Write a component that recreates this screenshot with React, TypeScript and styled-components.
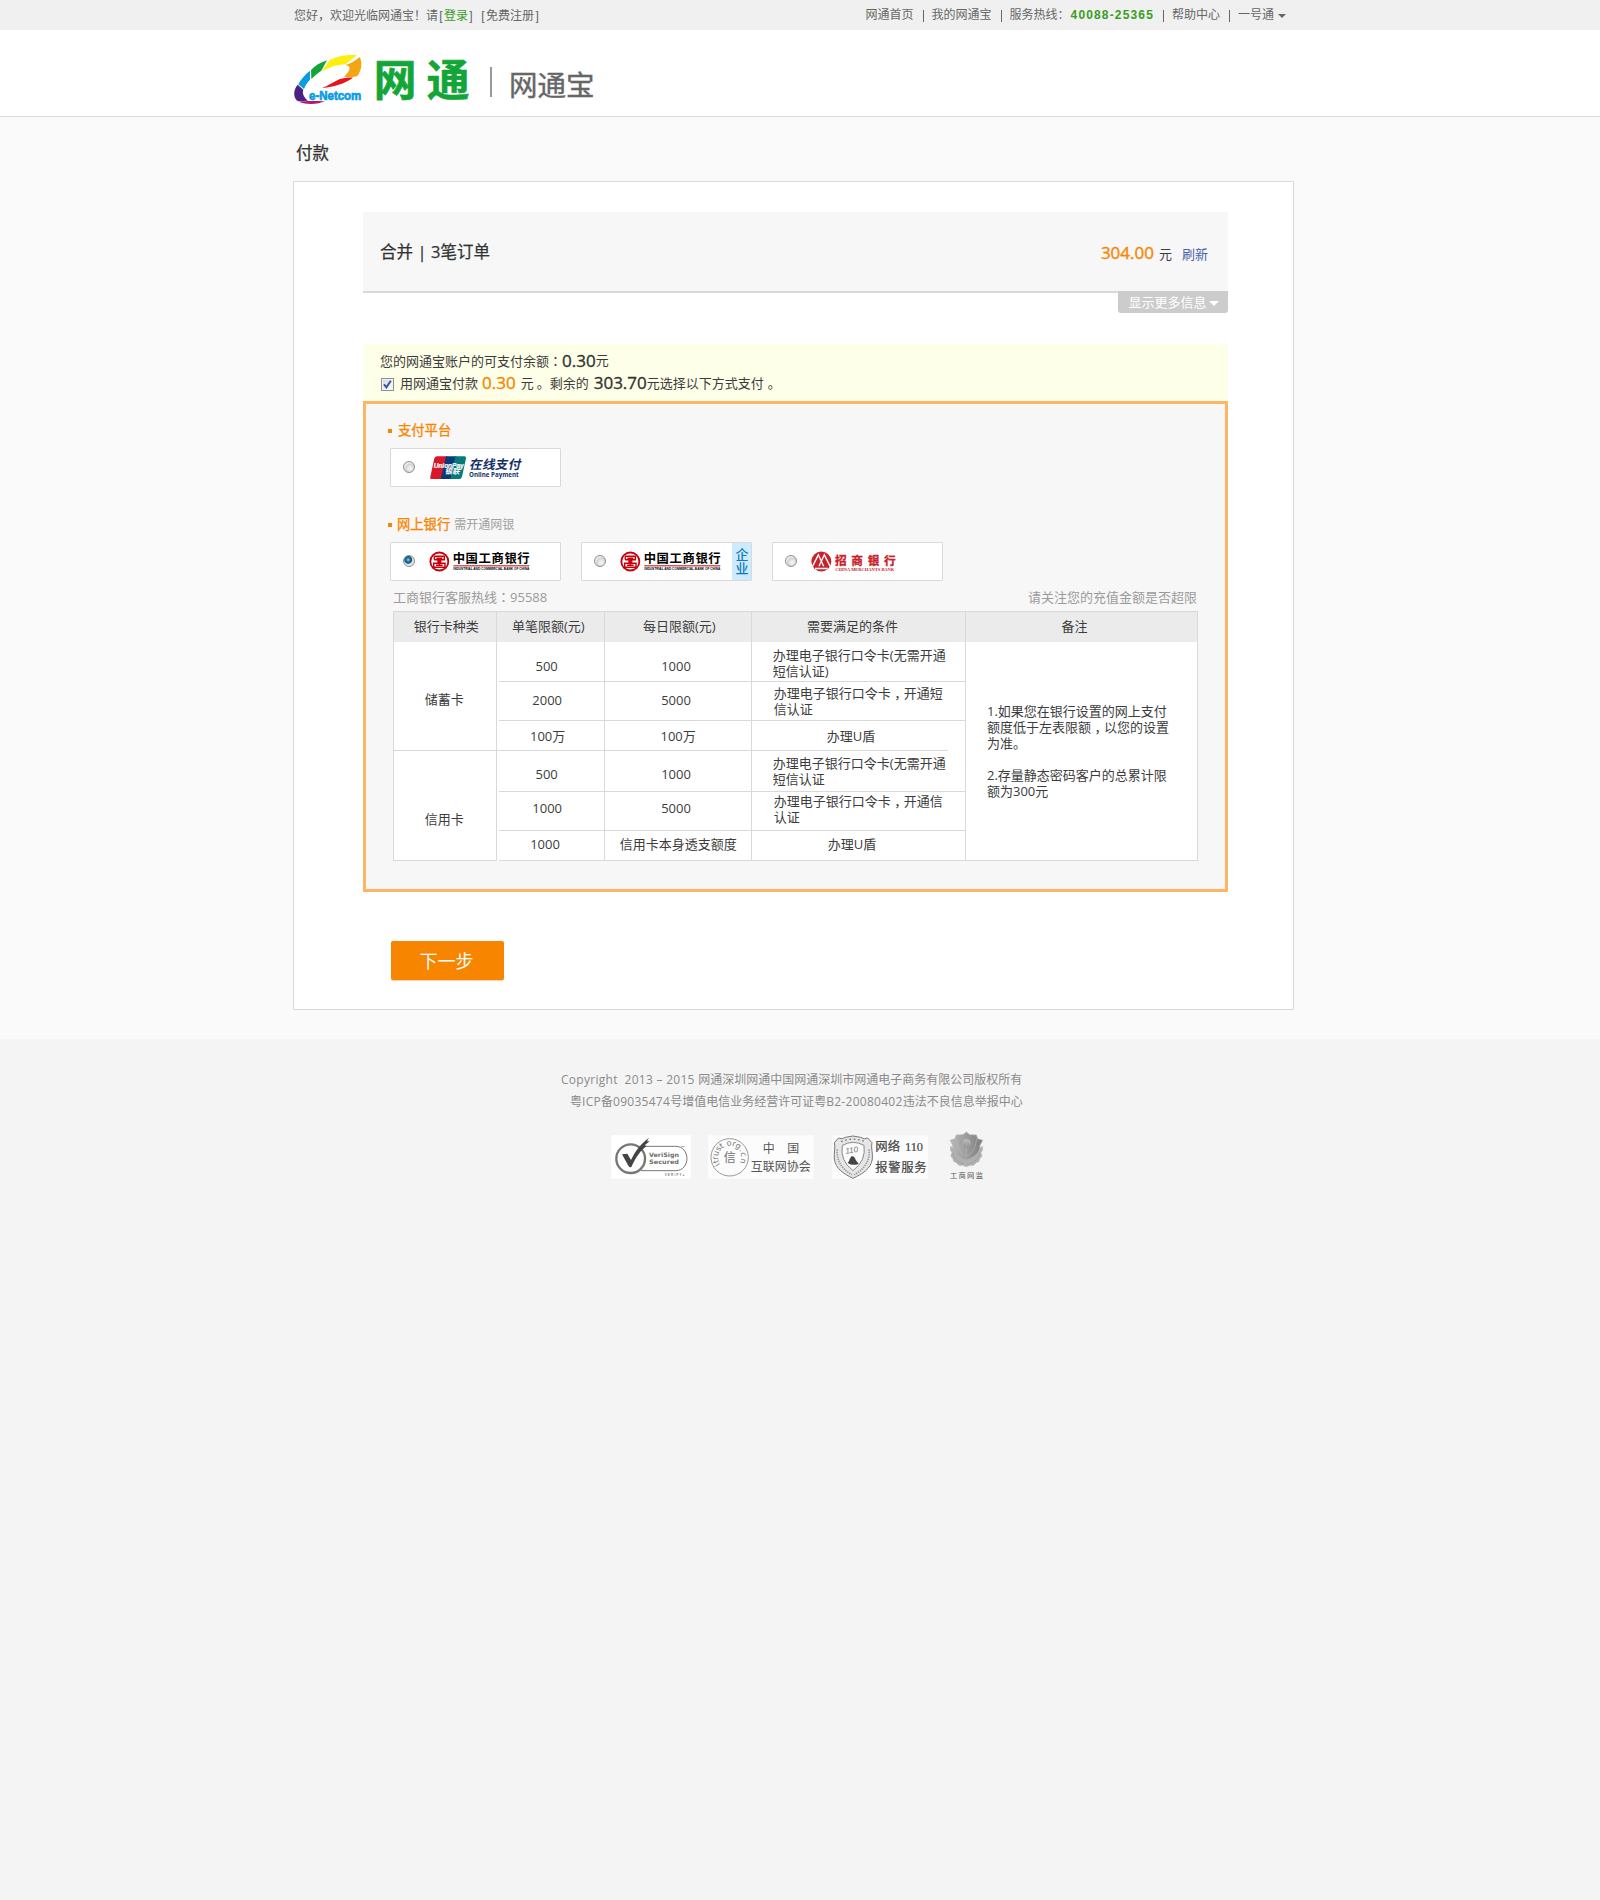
import React, { useState } from 'react';
import styled, { createGlobalStyle } from 'styled-components';

const GlobalStyle = createGlobalStyle`
  * { box-sizing: border-box; }
  body {
    margin: 0;
    background: #f4f4f4;
    color: #3c3c3c;
    font: 13px/16px "Open Sans", "Noto Sans CJK SC", sans-serif;
  }
  button { font: inherit; border: 0; padding: 0; cursor: pointer; }
`;

const CJK = '"Noto Sans CJK SC", sans-serif';
const LINE = '#d9d9d9';

const Page = styled.div`
  min-height: 1900px;
  display: flex;
  flex-direction: column;
`;

/* Full-width comma and colon, centred in their own em box */
const Mark = styled.span<{ $shift: number }>`
  position: relative;
  left: ${(p) => p.$shift}px;
`;

const Centered = styled.span`
  font-family: "Noto Sans CJK TC", ${CJK};
`;

const Prose = ({ children }: { children: string }) => (
  <>
    {children.split(/([，：])/).map((part, i) => {
      if (part === '，') return <Mark key={i} $shift={3.5}>，</Mark>;
      if (part === '：') return <Centered key={i}>：</Centered>;
      return part;
    })}
  </>
);

/* ---------- top bar ---------- */

const TopBar = styled.div`
  height: 30px;
  padding: 1px 314px 0 294px;
  background: #f0f0f0;
  display: flex;
  justify-content: space-between;
  font: 12px/29px "Liberation Sans", ${CJK};
  color: #666;
`;

const Greeting = styled.div`
  padding-top: 1px;
  white-space: nowrap;
`;

const Bracket = styled.span<{ $gap?: boolean }>`
  display: inline-block;
  width: 6px;
  text-align: center;
  margin-left: ${(p) => (p.$gap ? 6 : 0)}px;
`;

const Green = styled.span`
  color: #3a9d23;
`;

const TopNav = styled.div`
  display: flex;
  align-items: center;
  white-space: nowrap;
`;

const NavItem = styled.span`
  &:not(:last-child) {
    margin-right: 8px;
    padding-right: 10px;
    background: linear-gradient(#666, #666) right center / 1px 12px no-repeat;
  }
`;

const Hotline = styled.b`
  color: #3a9d23;
  letter-spacing: 1.15px;
  margin-left: 1px;
`;

const Caret = styled.i<{ $color: string; $size: number; $gap: number }>`
  display: inline-block;
  border: ${(p) => p.$size}px solid transparent;
  border-top-color: ${(p) => p.$color};
  border-bottom: 0;
  vertical-align: middle;
  margin-left: ${(p) => p.$gap}px;
`;

/* ---------- header ---------- */

const Header = styled.header`
  height: 87px;
  padding-left: 294px;
  border-bottom: 1px solid ${LINE};
  background: #fff;
  display: flex;
  align-items: flex-start;
`;

const LogoBox = styled.div`
  padding-top: 24px;
  height: 80px;
`;

const HeaderRule = styled.div`
  width: 2px;
  height: 30px;
  margin: 37px 17px 0 21px;
  background: #999;
`;

const ProductName = styled.div`
  padding-top: 40px;
  font: 28.5px/28px ${CJK};
  color: #666;
  -webkit-text-stroke: 0.4px #666;
`;

/* ---------- main ---------- */

const Main = styled.main`
  padding: 24px 0 29px 293px;
  background: #fafafa;
`;

const Title = styled.h1`
  margin: 0 0 18px 3px;
  font: 400 16.5px/22px ${CJK};
  -webkit-text-stroke: 0.25px #333;
  color: #333;
`;

const Card = styled.section`
  width: 1001px;
  height: 829px;
  padding: 30px 0 0 69px;
  border: 1px solid ${LINE};
  border-radius: 1px;
  background: #fff;
`;

const Inner = styled.div`
  width: 865px;
  display: flex;
  flex-direction: column;
`;

const Order = styled.div`
  height: 81px;
  padding: 0 20px 0 17px;
  border-bottom: 2px solid ${LINE};
  background: #f7f7f7;
  display: flex;
  justify-content: space-between;
  align-items: center;
`;

const OrderName = styled.div`
  padding-top: 1px;
  font-size: 16.5px;
  line-height: 20px;
  color: #333;
  word-spacing: 0.2px;
  -webkit-text-stroke: 0.25px #333;
`;

const OrderSum = styled.div`
  display: flex;
  align-items: baseline;
  padding-top: 4px;
`;

const Amount = styled.span<{ $orange?: boolean }>`
  font-size: 17px;
  color: ${(p) => (p.$orange ? '#f78500' : '#333')};
  -webkit-text-stroke: 0.35px ${(p) => (p.$orange ? '#f78500' : '#333')};
`;

const Unit = styled.span`
  margin: 0 10px 0 5px;
`;

const Refresh = styled.a`
  color: #4a62ad;
`;

const MoreTab = styled.button`
  align-self: flex-end;
  width: 110px;
  height: 22px;
  margin-top: -2px;
  padding-left: 1px;
  border-radius: 0 0 3px 3px;
  background: #ccc;
  color: #fff;
  line-height: 21px;
`;

const Balance = styled.div`
  height: 57px;
  margin-top: 31px;
  padding: 5px 0 0 17px;
  background: #feffe8;
`;

const BalanceLine = styled.div`
  height: 23px;
  line-height: 23px;
  display: flex;
  align-items: center;
  white-space: pre;
`;

const CheckBox = styled.button`
  width: 13px;
  height: 13px;
  margin: 1px 6px 0 1px;
  border: 1px solid #8e8f8f;
  background: linear-gradient(135deg, #cfd5dd, #fff);
  display: grid;
  place-items: center;
  box-shadow: inset 0 0 0 1px #f4f4f4;
`;

const Push = styled.span<{ $l?: number; $r?: number }>`
  margin: 0 ${(p) => p.$r ?? 0}px 0 ${(p) => p.$l ?? 0}px;
`;

const Methods = styled.div`
  height: 491px;
  padding: 18px 28px 0 24px;
  border: 3px solid #ffb664;
  background: #f7f7f7;
`;

const GroupTitle = styled.h2<{ $shift?: number }>`
  margin: 0 0 10px -2px;
  height: 16px;
  display: flex;
  align-items: center;
  font: 400 13.3px/16px ${CJK};
  -webkit-text-stroke: 0.3px #f78500;
  color: #f78500;
  &::before {
    content: '';
    width: 4px;
    height: 4px;
    margin: 1px ${(p) => p.$shift ?? 6}px 0 0;
    background: #f78500;
  }
`;

const GroupHint = styled.small`
  margin-left: 4px;
  font: 12px/16px ${CJK};
  -webkit-text-stroke: 0;
  color: #a0a0a0;
`;

const Banks = styled.div<{ $gap: number }>`
  display: flex;
  gap: 20px;
  margin-bottom: ${(p) => p.$gap}px;
`;

const Bank = styled.label`
  width: 171px;
  height: 39px;
  border: 1px solid ${LINE};
  border-radius: 1px;
  background: #fff;
  display: flex;
  align-items: center;
  padding-left: 12px;
`;

const Radio = styled.span<{ $on: boolean }>`
  width: 12px;
  height: 12px;
  margin-bottom: 1px;
  border: 1px solid #8e8f8f;
  border-radius: 50%;
  background: ${(p) =>
    p.$on
      ? 'radial-gradient(circle at 42% 38%, #8fdcfa 0, #1f7fb8 1.8px, #14496e 3.4px, #dfe4e8 4.4px)'
      : 'radial-gradient(circle at 62% 65%, #f6f6f6 0, #e2e2e2 3px, #cfcfcf 4.5px, #ececec 5.5px)'};
`;

const BankLogo = styled.span<{ $l?: number }>`
  display: flex;
  margin: 0 0 1px ${(p) => p.$l ?? 14}px;
`;

const Corporate = styled.span`
  width: 19px;
  height: 37px;
  margin-left: auto;
  padding: 4px 2px 0 3.5px;
  background: #cdebff;
  color: #0f78b4;
  font: 500 13px/14px ${CJK};
`;

const Notice = styled.div`
  display: flex;
  justify-content: space-between;
  margin: 0 0 6px 3px;
  color: #9b9b9b;
`;

/* ---------- limits table ---------- */

const Limits = styled.div`
  width: 805px;
  margin-left: 3px;
  display: grid;
  grid-template-columns: 103px 108px 147px 214px 232px;
  grid-template-rows: 30px 40px 39px 30px 41px 39px 30px;
  border: solid ${LINE};
  border-width: 1px 0 0 1px;
  background: #fff;
`;

interface CellProps {
  $l: number;
  $t: number;
  $head?: boolean;
  $rows?: number;
  $cut?: 'left' | 'right';
}

const Cell = styled.div<CellProps>`
  grid-row: span ${(p) => p.$rows ?? 1};
  padding: ${(p) => p.$t}px 0 0 ${(p) => p.$l}px;
  border-right: 1px solid ${LINE};
  white-space: pre;
  background: ${(p) =>
    p.$head
      ? '#ebebeb'
      : `linear-gradient(${LINE}, ${LINE}) ${p.$cut === 'right' ? 'left' : 'right'} bottom /
         ${p.$cut === 'left' ? 'calc(100% - 2px)' : p.$cut === 'right' ? '196px' : '100%'} 1px no-repeat`};
`;

const Next = styled.button`
  width: 113px;
  height: 39px;
  margin: 49px 0 0 28px;
  border-radius: 2px;
  background: #f78500;
  box-shadow: 0 1px 0 #fcd2a0;
  color: #fff;
  font: 18px/39px ${CJK};
  padding: 0 2px 0 0;
`;

/* ---------- footer ---------- */

const Footer = styled.footer`
  flex: 1;
  padding: 30px 0 0 561px;
  background: #f4f4f4;
  color: #8a8a8a;
  font-size: 12px;
  line-height: 22px;
`;

const FootLine = styled.div<{ $l?: number }>`
  padding-left: ${(p) => p.$l ?? 0}px;
  white-space: pre;
`;

const Latin = styled.span`
  letter-spacing: 0.28px;
`;

const Seals = styled.div`
  display: flex;
  align-items: flex-start;
  padding: 18px 0 0 50px;
`;

const Seal = styled.div<{ $gap: number; $top?: number }>`
  display: flex;
  margin: ${(p) => p.$top ?? 0}px ${(p) => p.$gap}px 0 0;
`;

/* ---------- drawings ---------- */

const Drawing = styled.svg`
  display: block;
  overflow: visible;
`;

const sans = 'Liberation Sans, Noto Sans CJK SC, sans-serif';
const cjk = 'Noto Sans CJK SC, sans-serif';

const SiteLogo = () => (
  <Drawing width="175" height="50" viewBox="42 162 525 150">
    <path fill="#fcee0d" d="M148 181C168 169 200 162 231 166L196 193C170 194 150 202 127 214Z" />
    <path fill="#13a538" d="M93 210C105 197 120 188 141 181L124 212C112 220 103 228 94 237Z" />
    <path fill="#0a9be2" d="M90 212V239C82 247 76 256 72 267L55 253C62 238 75 224 90 212Z" />
    <path fill="#4b2283" d="M53 254L70 269C66 281 72 292 84 302L55 304C40 296 38 272 53 254Z" />
    <path fill="#b0157b" d="M57 305C80 302 110 303 134 304C115 313 78 315 57 305Z" />
    <path fill="#f3a60f" d="M239 171C247 187 246 208 233 227C222 232 208 232 192 230C204 218 212 207 207 200C204 196 199 196 196 195C212 191 225 183 239 171Z" />
    <path fill="#e8141c" d="M219 233C196 250 165 260 126 264C145 257 163 245 178 238C192 234 205 232 219 233Z" />
    <text x="87" y="300" fontFamily={sans} fontWeight="700" fontSize="37" fill="#0a9be2" stroke="#0a9be2" strokeWidth="2" textLength="157" lengthAdjust="spacingAndGlyphs">e-Netcom</text>
    <g fontFamily={cjk} fontWeight="700" fontSize="128" fill="#13a538" stroke="#13a538" strokeWidth="2">
      <text x="281" y="287">网</text>
      <text x="440" y="287">通</text>
    </g>
  </Drawing>
);

const UnionPay = () => (
  <Drawing width="93" height="25" viewBox="240 194 279 75">
    <path fill="#d7182a" d="M262 198H292L276 266H246Q239 266 241 259L253 204Q255 198 262 198Z" />
    <path fill="#0b3b76" d="M288 198H320L305 266H272Z" />
    <path fill="#087a7c" d="M316 198H343Q349 198 348 204L336 259Q334 266 328 266H301Z" />
    <text x="251" y="232" fontFamily={sans} fontWeight="700" fontStyle="italic" fontSize="22" fill="#fff" stroke="#fff" strokeWidth=".7" textLength="90" lengthAdjust="spacingAndGlyphs">UnionPay</text>
    <text x="285" y="252" fontFamily={cjk} fontWeight="700" fontSize="22" fill="#fff" transform="translate(53 0) skewX(-12)">银联</text>
    <text x="359" y="235" fontFamily={cjk} fontWeight="700" fontSize="38" fill="#13306b" transform="translate(48 0) skewX(-12)" textLength="154">在线支付</text>
    <text x="357" y="261" fontFamily="Open Sans, sans-serif" fontWeight="700" fontSize="18.5" fill="#13306b" textLength="149" lengthAdjust="spacingAndGlyphs">Online Payment</text>
  </Drawing>
);

const Icbc = () => (
  <Drawing width="102" height="21" viewBox="236 481.5 306 63">
    <circle cx="267" cy="513" r="27" fill="#fff" stroke="#c7000b" strokeWidth="5.5" />
    <path
      fill="none"
      stroke="#c7000b"
      strokeWidth="4.4"
      d="M252 508V497H282V508H271V518H284V530H250V518H263V508H252M258 503H276M257 524H277M267 503V524"
    />
    <text x="307" y="518" fontFamily={cjk} fontWeight="700" fontSize="37" textLength="231">中国工商银行</text>
    <rect x="309" y="524.5" width="228" height="3" fill="#c7000b" />
    <text x="309" y="539" fontFamily={sans} fontWeight="700" fontSize="9" textLength="228" lengthAdjust="spacingAndGlyphs">INDUSTRIAL AND COMMERCIAL BANK OF CHINA</text>
  </Drawing>
);

const Cmb = () => (
  <Drawing width="84" height="21" viewBox="212 151.5 252 63">
    <circle cx="243" cy="183" r="30" fill="#c8232c" />
    <path fill="none" stroke="#fff" strokeWidth="4" d="M217 197L234 163L250 197M269 197L252 163L236 197M224 204H262" />
    <text x="284" y="192" fontFamily={cjk} fontWeight="700" fontSize="35" fill="#c8232c" stroke="#c8232c" strokeWidth="1" textLength="182">招商银行</text>
    <text x="285" y="211" fontFamily="Liberation Serif, serif" fontWeight="700" fontSize="13.5" fill="#c8232c" textLength="177" lengthAdjust="spacingAndGlyphs">CHINA MERCHANTS BANK</text>
  </Drawing>
);

const VeriSign = () => (
  <Drawing width="80" height="44" viewBox="211 253 240 132">
    <rect x="212" y="254" width="238" height="130" fill="#fff" />
    <path fill="none" stroke="#777" strokeWidth="3" d="M306 287H405C450 287 450 360 405 360H300" />
    <circle cx="270" cy="324" r="43" fill="#fff" stroke="#777" strokeWidth="7" />
    <path fill="#444" d="M244 311L260 309L271 328C282 304 296 283 325 261L319 272L327 272L312 284L318 286C300 298 284 322 272 349Q267 351 263 345Z" />
    <text x="325" y="319" fontFamily="DejaVu Sans, sans-serif" fontWeight="700" fontSize="18" fill="#707070" textLength="90" lengthAdjust="spacingAndGlyphs">VeriSign</text>
    <text x="325" y="340" fontFamily="DejaVu Sans, sans-serif" fontWeight="700" fontSize="18" fill="#707070" textLength="90" lengthAdjust="spacingAndGlyphs">Secured</text>
    <text x="372" y="377" fontFamily={sans} fontWeight="700" fontSize="9" fill="#777" textLength="60">VERIFY▸</text>
    <path stroke="#777" strokeWidth="2" d="M421 288H432" />
  </Drawing>
);

const ringLetters: [string, number][] = [
  ['i', -128], ['t', -113], ['r', -99], ['u', -80], ['s', -58], ['t', -41],
  ['o', -8], ['r', 12], ['g', 32], ['.', 52], ['c', 72], ['n', 100],
].map(([c, a]) => [c as string, (a as number) + 6]);

const Trust = () => (
  <Drawing width="106" height="44" viewBox="504 253 318 132">
    <rect x="504" y="254" width="317" height="130" rx="3" fill="#fcfcfc" />
    <circle cx="569" cy="320" r="56" fill="none" stroke="#999" strokeWidth="3" />
    <g fontFamily="DejaVu Sans, sans-serif" fontSize="24" fill="#777" textAnchor="middle">
      {ringLetters.map(([c, a], i) => (
        <text key={i} x="569" y="285" transform={`rotate(${a} 569 320)`}>{c}</text>
      ))}
    </g>
    <text x="551" y="334" fontFamily={cjk} fontSize="36" fontWeight="500" fill="#888">信</text>
    <g fontFamily={cjk} fontSize="36" fill="#555">
      <text x="668" y="306">中</text>
      <text x="742" y="306">国</text>
      <text x="632" y="361">互联网协会</text>
    </g>
  </Drawing>
);

const Police = () => (
  <Drawing width="97" height="44" viewBox="875 253 291 132">
    <rect x="876" y="254" width="287" height="130" rx="3" fill="#fcfcfc" />
    <path fill="#e6e6e6" stroke="#777" strokeWidth="3" d="M882 276L895 262Q905 268 915 260L938 256L961 260Q972 268 982 262L995 276C991 290 998 305 996 325C992 355 965 370 938 383C911 370 886 355 882 325C880 305 886 290 882 276Z" />
    <path fill="#fafafa" stroke="#888" strokeWidth="3" d="M906 284Q938 266 971 284Q978 330 938 360Q898 330 906 284Z" />
    <path fill="none" stroke="#999" strokeWidth="5" strokeDasharray="4 3" d="M891 296Q886 345 935 372M986 296Q991 345 942 372" />
    <path fill="none" stroke="#777" strokeWidth="4" strokeDasharray="5 8" d="M902 273Q938 258 974 273" />
    <path fill="#444" d="M934 316Q944 318 946 328L955 339Q938 347 922 337Q927 332 928 325Z" />
    <text x="915" y="307" fontFamily={sans} fontStyle="italic" fontSize="24" fill="#777" transform="rotate(-8 930 300)">110</text>
    <g fontFamily="Liberation Serif, Noto Sans CJK SC, serif" fontSize="37" fill="#444" stroke="#444" strokeWidth=".6">
      <text x="1005" y="300">网络</text>
      <text x="1094" y="302">110</text>
      <text x="1005" y="363" textLength="154">报警服务</text>
    </g>
  </Drawing>
);

const Emblem = () => (
  <Drawing width="36" height="49" viewBox="1227 241 108 147">
    <defs>
      <linearGradient id="metal" x1="0" x2="1">
        <stop offset="0" stopColor="#b8b8b8" />
        <stop offset=".5" stopColor="#9c9c9c" />
        <stop offset="1" stopColor="#7d7d7d" />
      </linearGradient>
    </defs>
    <path fill="#b0b0b0" stroke="#c5beb4" strokeWidth="1.5" d="M1232 286Q1228 300 1236 306Q1228 318 1238 322Q1238 334 1249 336Q1256 348 1268 344Q1279 352 1290 344Q1302 348 1309 336Q1320 334 1320 322Q1331 318 1322 306Q1331 300 1327 286L1312 300H1246Z" />
    <path fill="none" stroke="#8c8c8c" strokeWidth="2" strokeDasharray="5 3" d="M1238 308Q1244 332 1272 340M1320 308Q1314 332 1286 340" />
    <path fill="url(#metal)" stroke="#b5afa5" strokeWidth="2" d="M1279 244L1289 252L1309 253L1313 264L1328 269L1320 284C1320 306 1304 320 1279 328C1254 320 1238 306 1238 284L1231 269L1245 264L1249 253L1269 252Z" />
    <path fill="none" stroke="#bdbdbd" strokeWidth="1.5" d="M1247 262L1254 292Q1262 310 1279 318Q1296 310 1304 292L1311 262M1279 292V316" />
    <path fill="#b4b4b4" stroke="#8a8a8a" strokeWidth="1.5" d="M1265 282Q1264 264 1279 262Q1294 264 1293 282Q1279 290 1265 282ZM1271 277H1287V282H1271Z" />
    <text x="1230" y="383" fontFamily={cjk} fontSize="22" fill="#555" textLength="99">工商网监</text>
  </Drawing>
);

/* ---------- data ---------- */

const heads: [string, number][] = [
  ['银行卡种类', 19.7],
  ['单笔限额(元)', 15],
  ['每日限额(元)', 38],
  ['需要满足的条件', 55],
  ['备注', 95.5],
];

interface Limit {
  single: [string, number, number];
  daily: [string, number, number];
  rule: [string, number, number];
  cut?: boolean;
}

const savings: Limit[] = [
  { single: ['500', 38.5, 16], daily: ['1000', 56.2, 16], rule: ['办理电子银行口令卡(无需开通\n短信认证)', 20.8, 5] },
  { single: ['2000', 35.3, 10], daily: ['5000', 56.2, 10], rule: ['办理电子银行口令卡，开通短\n信认证', 21.8, 3] },
  { single: ['100万', 33, 7], daily: ['100万', 55.5, 7], rule: ['办理U盾', 74.7, 7], cut: true },
];

const credit: Limit[] = [
  { single: ['500', 38.5, 15], daily: ['1000', 56.2, 15], rule: ['办理电子银行口令卡(无需开通\n短信认证', 20.8, 4] },
  { single: ['1000', 35.3, 8], daily: ['5000', 56.2, 8], rule: ['办理电子银行口令卡，开通信\n认证', 21.8, 1] },
  { single: ['1000', 33.2, 5], daily: ['信用卡本身透支额度', 14.7, 5], rule: ['办理U盾', 75.7, 5] },
];

const remarks =
  '1.如果您在银行设置的网上支付\n额度低于左表限额，以您的设置\n为准。\n\n2.存量静态密码客户的总累计限\n额为300元';

const LimitCells = ({ row }: { row: Limit }) => (
  <>
    <Cell $l={row.single[1]} $t={row.single[2]} $cut={row.cut ? undefined : 'left'}>{row.single[0]}</Cell>
    <Cell $l={row.daily[1]} $t={row.daily[2]}>{row.daily[0]}</Cell>
    <Cell $l={row.rule[1]} $t={row.rule[2]} $cut={row.cut ? 'right' : undefined}><Prose>{row.rule[0]}</Prose></Cell>
  </>
);

export default function App() {
  const [picked, setPicked] = useState('icbc');
  const [useBalance, setUseBalance] = useState(true);

  return (
    <Page>
      <GlobalStyle />
      <TopBar>
        <Greeting>
          您好，欢迎光临网通宝！请<Bracket>[</Bracket><Green>登录</Green><Bracket>]</Bracket>
          <Bracket $gap>[</Bracket>免费注册<Bracket>]</Bracket>
        </Greeting>
        <TopNav>
          <NavItem>网通首页</NavItem>
          <NavItem>我的网通宝</NavItem>
          <NavItem>服务热线：<Hotline>40088-25365</Hotline></NavItem>
          <NavItem>帮助中心</NavItem>
          <NavItem>一号通<Caret $color="#666" $size={4} $gap={4} /></NavItem>
        </TopNav>
      </TopBar>

      <Header>
        <LogoBox><SiteLogo /></LogoBox>
        <HeaderRule />
        <ProductName>网通宝</ProductName>
      </Header>

      <Main>
        <Title>付款</Title>
        <Card>
          <Inner>
            <Order>
              <OrderName>合并 | 3笔订单</OrderName>
              <OrderSum>
                <Amount $orange>304.00</Amount>
                <Unit>元</Unit>
                <Refresh>刷新</Refresh>
              </OrderSum>
            </Order>
            <MoreTab>显示更多信息<Caret $color="#fff" $size={5} $gap={2} /></MoreTab>

            <Balance>
              <BalanceLine>
                <span><Prose>您的网通宝账户的可支付余额：</Prose></span>
                <Amount>0.30</Amount>元
              </BalanceLine>
              <BalanceLine>
                <CheckBox onClick={() => setUseBalance(!useBalance)}>
                  {useBalance && (
                    <svg width="9" height="9" viewBox="0 0 9 9">
                      <path d="M1 4.2L3.4 7.4L7.8 .8" fill="none" stroke="#39509a" strokeWidth="1.9" />
                    </svg>
                  )}
                </CheckBox>
                用网通宝付款<Push $l={4} $r={5}><Amount $orange>0.30</Amount></Push>
                元<Push $l={3}>。</Push>剩余的<Push $l={5}><Amount>303.70</Amount></Push>
                元选择以下方式支付<Push $l={4}>。</Push>
              </BalanceLine>
            </Balance>

            <Methods>
              <GroupTitle>支付平台</GroupTitle>
              <Banks $gap={29}>
                <Bank onClick={() => setPicked('union')}>
                  <Radio $on={picked === 'union'} />
                  <BankLogo $l={15}><UnionPay /></BankLogo>
                </Bank>
              </Banks>

              <GroupTitle $shift={5}>网上银行<GroupHint>需开通网银</GroupHint></GroupTitle>
              <Banks $gap={8}>
                <Bank onClick={() => setPicked('icbc')}>
                  <Radio $on={picked === 'icbc'} />
                  <BankLogo><Icbc /></BankLogo>
                </Bank>
                <Bank onClick={() => setPicked('icbc-corp')}>
                  <Radio $on={picked === 'icbc-corp'} />
                  <BankLogo><Icbc /></BankLogo>
                  <Corporate>企业</Corporate>
                </Bank>
                <Bank onClick={() => setPicked('cmb')}>
                  <Radio $on={picked === 'cmb'} />
                  <BankLogo><Cmb /></BankLogo>
                </Bank>
              </Banks>

              <Notice>
                <span><Prose>工商银行客服热线：95588</Prose></span>
                <span>请关注您的充值金额是否超限</span>
              </Notice>

              <Limits>
                {heads.map(([name, left]) => (
                  <Cell key={name} $head $l={left} $t={6}>{name}</Cell>
                ))}
                <Cell $rows={3} $l={30.7} $t={49}>储蓄卡</Cell>
                <LimitCells row={savings[0]} />
                <Cell $rows={6} $l={21} $t={61}><Prose>{remarks}</Prose></Cell>
                <LimitCells row={savings[1]} />
                <LimitCells row={savings[2]} />
                <Cell $rows={3} $l={30.7} $t={60}>信用卡</Cell>
                {credit.map((row, i) => <LimitCells key={i} row={row} />)}
              </Limits>
            </Methods>
          </Inner>
          <Next>下一步</Next>
        </Card>
      </Main>

      <Footer>
        <FootLine><Latin>{'Copyright  2013 – 2015 '}</Latin>网通深圳网通中国网通深圳市网通电子商务有限公司版权所有</FootLine>
        <FootLine $l={9}>
          粤<Latin>ICP</Latin>备<Latin>09035474</Latin>号增值电信业务经营许可证粤<Latin>B2-20080402</Latin>违法不良信息举报中心
        </FootLine>
        <Seals>
          <Seal $gap={17} $top={4}><VeriSign /></Seal>
          <Seal $gap={18} $top={4}><Trust /></Seal>
          <Seal $gap={20} $top={4}><Police /></Seal>
          <Seal $gap={0}><Emblem /></Seal>
        </Seals>
      </Footer>
    </Page>
  );
}
